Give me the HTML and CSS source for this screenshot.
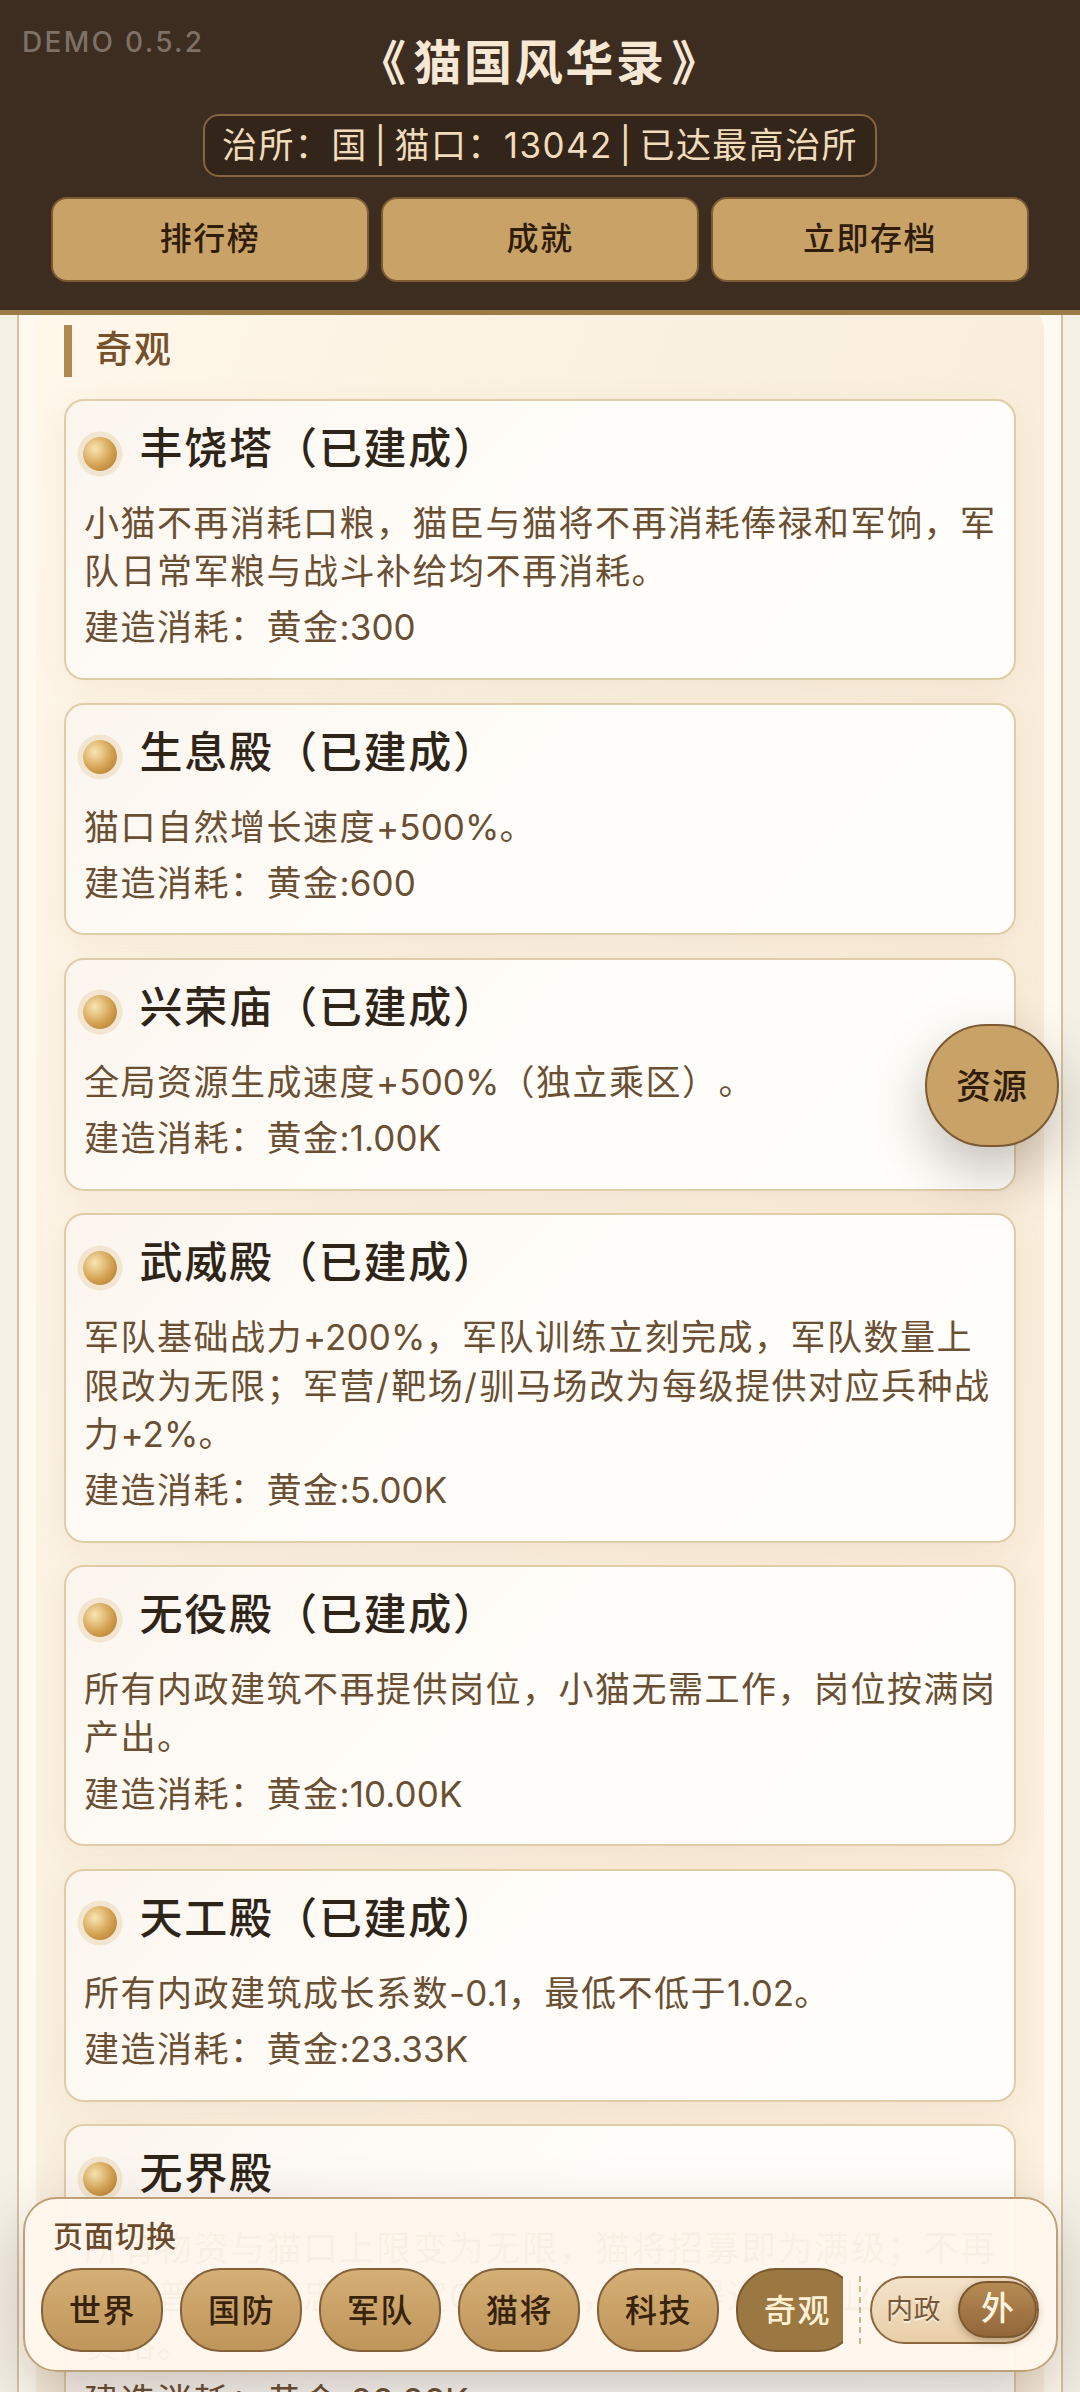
FILE: index.html
```html
<!DOCTYPE html>
<html lang="zh-CN">
<head>
<meta charset="utf-8">
<title>猫国风华录</title>
<link rel="stylesheet" href="styles.css">
</head>
<body>
<header class="top">
  <span class="version">DEMO 0.5.2</span>
  <h1 class="game-title"><span>《</span><span>猫国风华录</span><span>》</span></h1>
  <div class="status">治所：国 | 猫口：13042 | 已达最高治所</div>
  <div class="actions">
    <button class="action">排行榜</button>
    <button class="action">成就</button>
    <button class="action">立即存档</button>
  </div>
</header>
<main class="page">
  <section class="panel">
    <h2 class="section-title">奇观</h2>
    <article class="card"><h3 class="name">丰饶塔（已建成）</h3><p class="desc">小猫不再消耗口粮，猫臣与猫将不再消耗俸禄和军饷，军<br>队日常军粮与战斗补给均不再消耗。</p><p class="cost">建造消耗：黄金<span class="num">:300</span></p></article>
    <article class="card"><h3 class="name">生息殿（已建成）</h3><p class="desc">猫口自然增长速度<span class="num">+500%</span>。</p><p class="cost">建造消耗：黄金<span class="num">:600</span></p></article>
    <article class="card"><h3 class="name">兴荣庙（已建成）</h3><p class="desc">全局资源生成速度<span class="num">+500%</span>（独立乘区）。</p><p class="cost">建造消耗：黄金<span class="num">:1.00K</span></p></article>
    <article class="card"><h3 class="name">武威殿（已建成）</h3><p class="desc">军队基础战力<span class="num">+200%</span>，军队训练立刻完成，军队数量上<br>限改为无限；军营<span class="slash">/</span>靶场<span class="slash">/</span>驯马场改为每级提供对应兵种战<br>力<span class="num">+2%</span>。</p><p class="cost">建造消耗：黄金<span class="num">:5.00K</span></p></article>
    <article class="card"><h3 class="name">无役殿（已建成）</h3><p class="desc">所有内政建筑不再提供岗位，小猫无需工作，岗位按满岗<br>产出。</p><p class="cost">建造消耗：黄金<span class="num">:10.00K</span></p></article>
    <article class="card"><h3 class="name">天工殿（已建成）</h3><p class="desc">所有内政建筑成长系数<span class="num">-0.1</span>，最低不低于<span class="num">1.02</span>。</p><p class="cost">建造消耗：黄金<span class="num">:23.33K</span></p></article>
    <article class="card"><h3 class="name">无界殿</h3><p class="desc">所有物资与猫口上限变为无限，猫将招募即为满级；不再<br>招募普通猫将忠诚固定<span class="num">0</span>点起步，可获得进阶专业所需的<br>资格。</p><p class="cost">建造消耗：黄金<span class="num">:66.66K</span></p></article>
  </section>
</main>
<button class="fab">资源</button>
<nav class="dock">
  <div class="dock-label">页面切换</div>
  <div class="dock-row">
    <div class="tabs">
      <button class="tab">世界</button>
      <button class="tab">国防</button>
      <button class="tab">军队</button>
      <button class="tab">猫将</button>
      <button class="tab">科技</button>
      <button class="tab active">奇观</button>
    </div>
    <div class="divider"></div>
    <div class="switch"><span class="switch-off">内政</span><span class="switch-on">外</span></div>
  </div>
</nav>
</body>
</html>
```
FILE: styles.css
```css
* { box-sizing: border-box; margin: 0; padding: 0; }
html, body { height: 2392px; overflow: hidden; }
body {
  position: relative;
  background: #f4f0e5;
  font-family: Inter, "Noto Sans CJK SC", sans-serif;
  color: #2f2418;
  white-space: nowrap;
  text-spacing-trim: space-all;
}
button { font: inherit; border: 2px solid #7b5a34; letter-spacing: inherit; }

.top {
  position: relative;
  z-index: 2;
  height: 315px;
  background: #3d2c20;
  border-bottom: 5px solid #9b7a48;
  display: flex;
  flex-direction: column;
  align-items: center;
}
.version {
  position: absolute;
  left: 22px;
  top: 24px;
  font-size: 28px;
  line-height: 36px;
  font-weight: 500;
  letter-spacing: 2.3px;
  color: #7d7167;
}
.game-title {
  display: flex;
  gap: 5px;
  margin-top: 27px;
  height: 71px;
  font-size: 48px;
  line-height: 71px;
  font-weight: 700;
  letter-spacing: 2.6px;
  color: #f7e8d6;
}
.status {
  margin-top: 16px;
  width: 674px;
  height: 63px;
  border: 2px solid #85653f;
  border-radius: 16px;
  background: #33251a;
  color: #f0dcbb;
  font-size: 35px;
  line-height: 58px;
  letter-spacing: 1.4px;
  word-spacing: -4.3px;
  text-align: center;
}
.actions {
  margin-top: 20px;
  width: 978px;
  display: grid;
  grid-template-columns: repeat(3, 1fr);
  gap: 12px;
}
.action {
  height: 85px;
  padding-bottom: 7px;
  border-radius: 16px;
  background: #c8a267;
  color: #2f1c0a;
  font-size: 32px;
  font-weight: 500;
  letter-spacing: 1.5px;
}

.page {
  margin: 0 17px;
  height: 2077px;
  overflow: hidden;
  border: solid #d3c2a2;
  border-width: 0 2px;
  padding: 0 17px;
  background: #fefaf1;
}
.panel {
  margin-top: -9px;
  padding: 19px 28px 0;
  border-radius: 24px;
  background: linear-gradient(110deg, #fff7ea 0%, #faf0df 35%, #f9edda 65%, #fdf1e0 100%);
  height: 2500px;
}
.section-title {
  height: 52px;
  margin-bottom: 22px;
  border-left: 8px solid #b08850;
  padding-left: 23px;
  font-size: 37px;
  line-height: 50px;
  font-weight: 500;
  letter-spacing: 2px;
  color: #76512c;
}
.card {
  position: relative;
  margin-bottom: 22.6px;
  padding: 19px 18px 26.4px;
  border: 2px solid #dfcca8;
  border-radius: 20px;
  background: linear-gradient(135deg, #fbf5ee 0%, #fffdf9 45%, #fffefa 100%);
  box-shadow: 0 8px 32px rgba(140, 90, 40, .07);
}
.card::before {
  content: "";
  position: absolute;
  left: 17px;
  top: 35.5px;
  width: 34px;
  height: 34px;
  border-radius: 50%;
  background: radial-gradient(circle at 35% 35%, #f9e5b4 0%, #d3a050 55%, #a87428 100%);
  box-shadow: 0 0 0 5.5px rgba(205, 165, 90, .2);
}
.name {
  padding-left: 55.5px;
  height: 60px;
  font-size: 43px;
  line-height: 56px;
  font-weight: 500;
  letter-spacing: 1.8px;
}
.desc, .cost {
  font-size: 35px;
  line-height: 48.2px;
  letter-spacing: 1.5px;
  color: #6b4f33;
}
.desc { margin-top: 19px; }
.cost { margin-top: 8px; }
.num { letter-spacing: .1px; }
.slash { letter-spacing: 2.6px; }

.fab {
  position: absolute;
  left: 925px;
  top: 1024px;
  z-index: 3;
  width: 134px;
  height: 123px;
  padding-bottom: 5px;
  border-radius: 62px;
  background: #c8a267;
  color: #2f1c0a;
  font-size: 35px;
  font-weight: 500;
  letter-spacing: 1px;
  box-shadow: 0 24px 56px rgba(60, 44, 30, .3);
}

.dock {
  position: absolute;
  left: 23px;
  top: 2197px;
  z-index: 3;
  width: 1035px;
  height: 175px;
  padding: 13px 17px 0 16px;
  border: 2px solid #c0a077;
  border-radius: 34px;
  background: rgba(255, 247, 236, .96);
  box-shadow: 0 24px 60px rgba(60, 44, 30, .26);
}
.dock-label {
  height: 56px;
  padding-left: 12px;
  font-size: 30px;
  line-height: 48px;
  font-weight: 500;
  letter-spacing: 1px;
  color: #6b4a2c;
}
.dock-row { display: flex; align-items: center; height: 84px; }
.tabs { display: flex; gap: 17px; width: 802px; overflow: hidden; }
.tab {
  flex: none;
  width: 122px;
  height: 84px;
  padding: 0 0 5px 1px;
  border-color: #84613a;
  border-radius: 40px;
  background: linear-gradient(#d4af76, #bf955a);
  color: #37220c;
  font-size: 32px;
  font-weight: 500;
  letter-spacing: 1.5px;
}
.tab.active { background: #9b7742; border-color: #7b5a32; color: #fff0d6; }
.divider {
  margin-left: 16px;
  width: 2px;
  height: 68px;
  background: repeating-linear-gradient(#cdb58f 0 6px, transparent 6px 10.3px);
}
.switch {
  margin-left: 9px;
  width: 169px;
  height: 68px;
  border: 2px solid #8c6840;
  border-radius: 34px;
  background: linear-gradient(#f3e2ca, #e9cfa8);
  display: flex;
  align-items: center;
  justify-content: space-between;
  padding-left: 14px;
}
.switch-off {
  font-size: 27px;
  line-height: 40px;
  letter-spacing: .5px;
  color: #76583a;
  text-shadow: 0 2px 0 #fbeedb;
}
.switch-on {
  width: 79px;
  height: 57px;
  margin-top: -2px;
  border: 2px solid #7c5830;
  border-radius: 29px;
  background: linear-gradient(#b58b52, #92663a);
  color: #fff3e0;
  font-size: 33px;
  line-height: 51px;
  font-weight: 500;
  text-align: center;
  box-shadow: 0 3px 9px rgba(80, 50, 20, .35);
}
```
